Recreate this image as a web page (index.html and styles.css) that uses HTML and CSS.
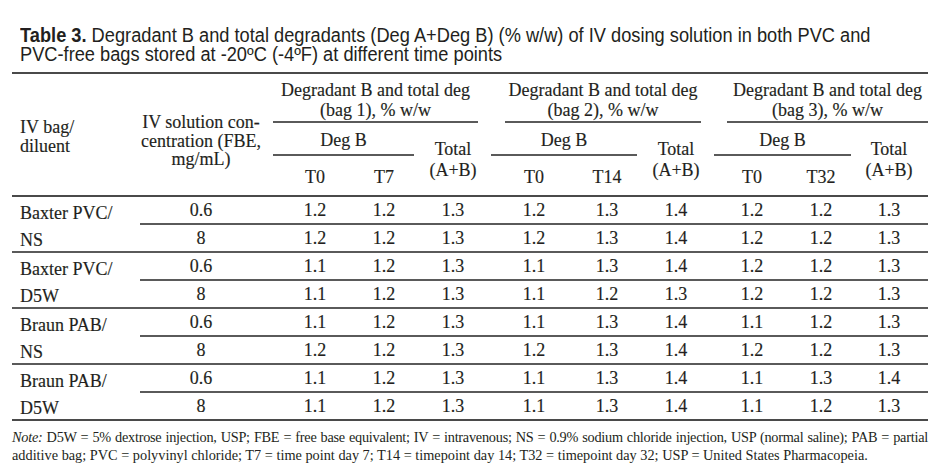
FILE: index.html
```html
<!DOCTYPE html>
<html>
<head>
<meta charset="utf-8">
<link rel="stylesheet" href="styles.css">
</head>
<body>
<div class="page">
  <div class="title"><span class="tline"><b>Table 3.</b> Degradant B and total degradants (Deg A+Deg B) (% w/w) of IV dosing solution in both PVC and</span><span class="tline">PVC-free bags stored at -20ºC (-4ºF) at different time points</span></div>
  <div class="table">
    <div class="head">
      <div class="h-bag">IV bag/<br>diluent</div>
      <div class="h-conc">IV solution con-<br>centration (FBE,<br>mg/mL)</div>
      <div class="grp g1">Degradant B and total deg<br>(bag 1), % w/w</div>
      <div class="grp g2">Degradant B and total deg<br>(bag 2), % w/w</div>
      <div class="grp g3">Degradant B and total deg<br>(bag 3), % w/w</div>
      <div class="sub s1">Deg B</div>
      <div class="sub s2">Deg B</div>
      <div class="sub s3">Deg B</div>
      <div class="tot t1">Total<br>(A+B)</div>
      <div class="tot t2">Total<br>(A+B)</div>
      <div class="tot t3">Total<br>(A+B)</div>
      <div class="tp c3">T0</div>
      <div class="tp c4">T7</div>
      <div class="tp c6">T0</div>
      <div class="tp c7">T14</div>
      <div class="tp c9">T0</div>
      <div class="tp c10">T32</div>
    </div>

    <div class="group">
      <div class="label">Baxter PVC/<br>NS</div>
      <div class="rows">
        <div class="row"><span>0.6</span><span class="c3">1.2</span><span>1.2</span><span>1.3</span><span>1.2</span><span>1.3</span><span>1.4</span><span>1.2</span><span>1.2</span><span class="c11">1.3</span></div>
        <div class="row"><span>8</span><span class="c3">1.2</span><span>1.2</span><span>1.3</span><span>1.2</span><span>1.3</span><span>1.4</span><span>1.2</span><span>1.2</span><span class="c11">1.3</span></div>
      </div>
    </div>
    <div class="group">
      <div class="label">Baxter PVC/<br>D5W</div>
      <div class="rows">
        <div class="row"><span>0.6</span><span class="c3">1.1</span><span>1.2</span><span>1.3</span><span>1.1</span><span>1.3</span><span>1.4</span><span>1.2</span><span>1.2</span><span class="c11">1.3</span></div>
        <div class="row"><span>8</span><span class="c3">1.1</span><span>1.2</span><span>1.3</span><span>1.1</span><span>1.2</span><span>1.3</span><span>1.2</span><span>1.2</span><span class="c11">1.3</span></div>
      </div>
    </div>
    <div class="group">
      <div class="label">Braun PAB/<br>NS</div>
      <div class="rows">
        <div class="row"><span>0.6</span><span class="c3">1.1</span><span>1.2</span><span>1.3</span><span>1.1</span><span>1.3</span><span>1.4</span><span>1.1</span><span>1.2</span><span class="c11">1.3</span></div>
        <div class="row"><span>8</span><span class="c3">1.2</span><span>1.2</span><span>1.3</span><span>1.2</span><span>1.3</span><span>1.4</span><span>1.2</span><span>1.2</span><span class="c11">1.3</span></div>
      </div>
    </div>
    <div class="group last">
      <div class="label">Braun PAB/<br>D5W</div>
      <div class="rows">
        <div class="row"><span>0.6</span><span class="c3">1.1</span><span>1.2</span><span>1.3</span><span>1.1</span><span>1.3</span><span>1.4</span><span>1.1</span><span>1.3</span><span class="c11">1.4</span></div>
        <div class="row"><span>8</span><span class="c3">1.1</span><span>1.2</span><span>1.3</span><span>1.1</span><span>1.3</span><span>1.4</span><span>1.1</span><span>1.2</span><span class="c11">1.3</span></div>
      </div>
    </div>
  </div>
  <div class="note">
    <span class="l1"><i>Note:</i> D5W = 5% dextrose injection, USP; FBE = free base equivalent; IV = intravenous; NS = 0.9% sodium chloride injection, USP (normal saline); PAB = partial</span>
    <span class="l2">additive bag; PVC = polyvinyl chloride; T7 = time point day 7; T14 = timepoint day 14; T32 = timepoint day 32; USP = United States Pharmacopeia.</span>
  </div>
</div>
</body>
</html>
```
FILE: styles.css
```css
* { box-sizing: border-box; }
html, body { margin: 0; padding: 0; background: #fff; }
body { color: #231f20; }
.page { padding: 26px 12px 0 12px; width: 940px; }

.title {
  font-family: "Liberation Sans", Arial, sans-serif;
  font-size: 19.5px;
  line-height: 19px;
  padding-left: 8px;
  margin-bottom: 8px;
  height: 38px;
  white-space: nowrap;
}
.tline {
  display: block;
  height: 19px;
  transform: scaleX(0.935);
  transform-origin: 0 0;
}
.title b { font-weight: bold; }

.table {
  width: 916px;
  font-family: "Liberation Serif", serif;
  font-size: 18px;
  -webkit-text-stroke: 0.15px #231f20;
  border-top: 2px solid #4a4a4a;
  border-bottom: 2px solid #4a4a4a;
}

.head {
  display: grid;
  grid-template-columns: 128px 122px 88px 68px 70px 92px 54px 84px 68px 70px 72px;
  grid-template-rows: 49px 33px 39px;
  border-bottom: 2px solid #4a4a4a;
  text-align: center;
}
.h-bag { grid-column: 1; grid-row: 1 / 4; text-align: left; padding: 44px 0 0 8px; line-height: 19px; }
.h-conc { grid-column: 2; grid-row: 1 / 4; padding-top: 39px; line-height: 18.5px; white-space: nowrap; }
.grp { grid-row: 1; line-height: 20px; padding-top: 6px; border-bottom: 2px solid #5a5a5a; white-space: nowrap; }
.g1 { grid-column: 3 / 6; margin: 0 10px 0 11px; }
.g2 { grid-column: 6 / 9; margin: 0 17px 0 17px; }
.g3 { grid-column: 9 / 12; margin: 0 0 0 9px; }
.sub { grid-row: 2; line-height: 20px; padding-top: 7px; border-bottom: 2px solid #5a5a5a; }
.s1 { grid-column: 3 / 5; margin: 0 4px 0 11px; }
.s2 { grid-column: 6 / 8; margin: 0 -3px 0 3px; }
.s3 { grid-column: 9 / 11; margin: 0 5px 0 -4px; }
.tot { grid-row: 2 / 4; line-height: 21px; padding-top: 16px; }
.t1 { grid-column: 5; }
.t2 { grid-column: 8; }
.t3 { grid-column: 11; padding-right: 6px; }
.tp { grid-row: 3; line-height: 20px; padding-top: 11px; }
.head .c3 { grid-column: 3; padding-left: 18px; }
.head .c4 { grid-column: 4; }
.head .c6 { grid-column: 6; }
.head .c7 { grid-column: 7; }
.head .c9 { grid-column: 9; }
.head .c10 { grid-column: 10; }

.group {
  display: grid;
  grid-template-columns: 128px 1fr;
  border-bottom: 2px solid #5a5a5a;
}
.group.last { border-bottom: none; }
.label { padding: 3px 0 0 8px; line-height: 27px; height: 54px; white-space: nowrap; }
.row {
  display: grid;
  grid-template-columns: 122px 88px 68px 70px 92px 54px 84px 68px 70px 72px;
  height: 26px;
  line-height: 26px;
  text-align: center;
}
.row:first-child { height: 28px; border-bottom: 2px solid #5a5a5a; }
.row .c3 { padding-left: 18px; }
.row .c11 { padding-right: 6px; }

.note {
  width: 916px;
  margin-top: 7px;
  font-family: "Liberation Serif", serif;
  font-size: 14.3px;
  line-height: 18px;
}
.note span { display: block; white-space: nowrap; }
.note .l1 { text-align: justify; text-align-last: justify; white-space: normal; letter-spacing: -0.25px; }
```
